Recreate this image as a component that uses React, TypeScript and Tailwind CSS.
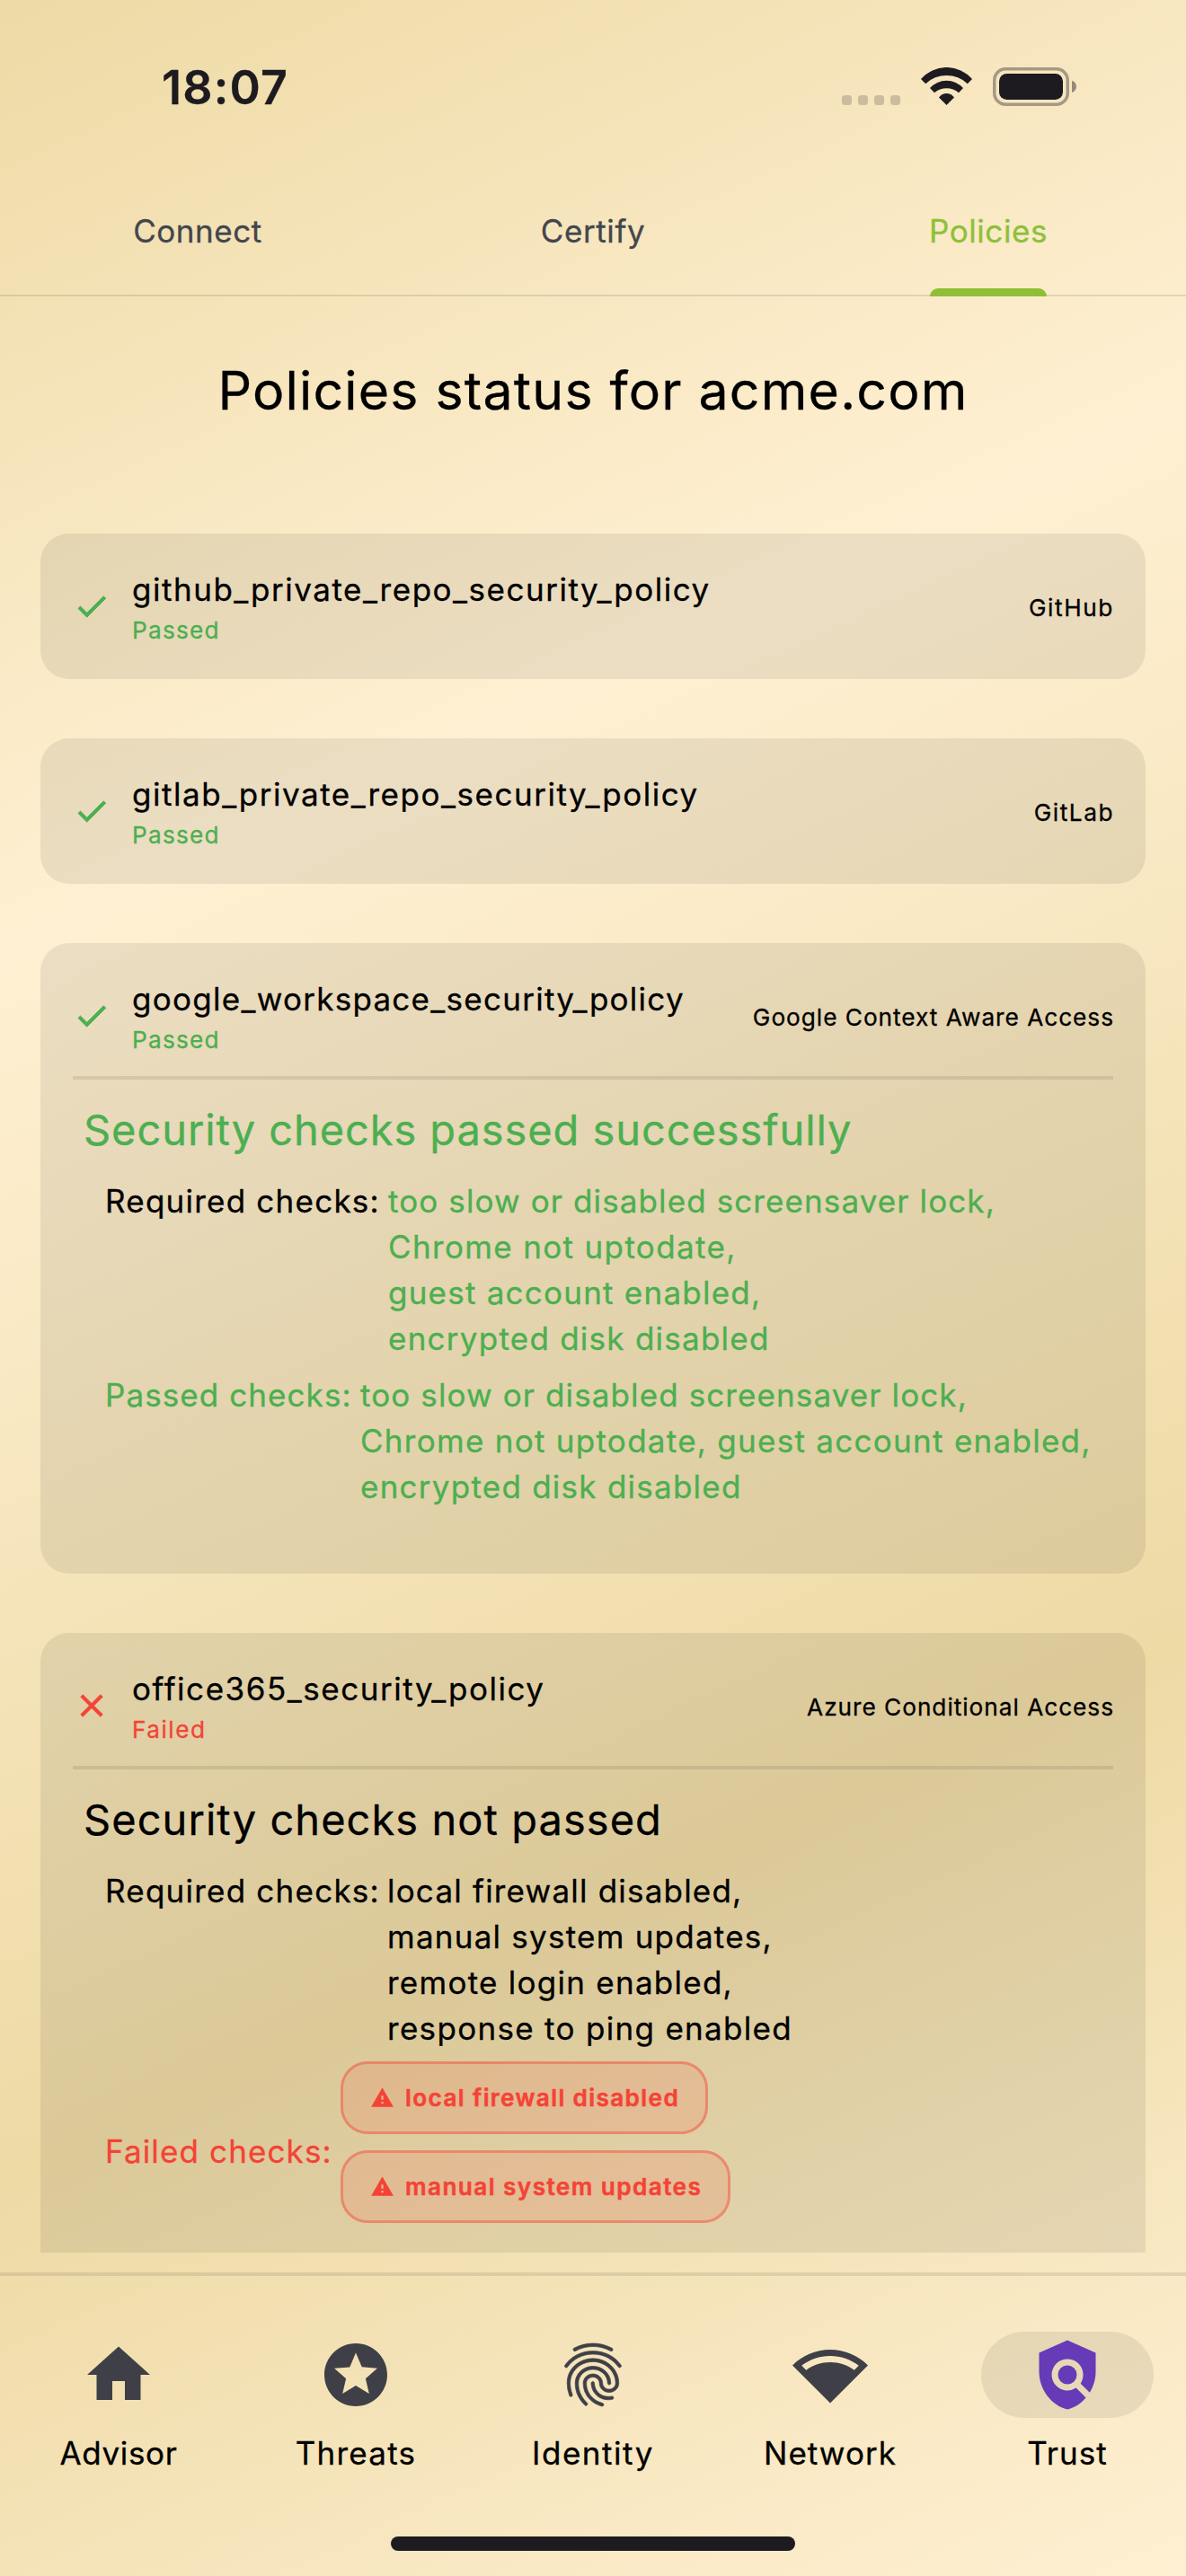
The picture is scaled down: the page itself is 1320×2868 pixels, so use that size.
import type { ReactNode } from "react";
import { MdCheck, MdClose, MdFingerprint, MdHome, MdPolicy, MdStars, MdWarning } from "react-icons/md";

type Line = { text: string; tracking: string };

function StatusBar() {
  return (
    <div className="flex h-[200px] shrink-0 items-start justify-between pr-[122px] pl-[180px]">
      <span className="mt-[68px] text-[52px] leading-[60px] font-semibold tracking-[1.2px] text-[#1d1b20]">18:07</span>
      <svg className="mt-[75px] h-[43px] w-[261px]" viewBox="0 0 261 43" fill="#1d1b20">
        <g fillOpacity="0.2">
          <rect x="0" y="31" width="11" height="11" rx="3.5" />
          <rect x="18" y="31" width="11" height="11" rx="3.5" />
          <rect x="36" y="31" width="11" height="11" rx="3.5" />
          <rect x="54" y="31" width="11" height="11" rx="3.5" />
        </g>
        <path d="M88 13A37.7 37.7 0 0 1 145 13L139.8 18.2A34 34 0 0 0 93.2 18.2Z" />
        <path d="M98 23A24.8 24.8 0 0 1 135 23L130 28.3A20.7 20.7 0 0 0 103 28.3Z" />
        <path d="M108 33.5A10.3 10.3 0 0 1 125 33.5L116.5 42Z" />
        <rect x="169.75" y="1.75" width="81.5" height="39.5" rx="12.5" fill="none" stroke="#1d1b20" strokeOpacity="0.38" strokeWidth="3.5" />
        <rect x="175" y="7" width="71" height="29" rx="8.5" />
        <path d="M256 14.7C259 15.6 261 18.2 261 21.3S259 27 256 28Z" fillOpacity="0.45" />
      </svg>
    </div>
  );
}

function Tabs() {
  return (
    <div className="grid h-[130px] shrink-0 grid-cols-3 border-b-2 border-black/10 text-[35px] leading-[50px] text-[#43464c]">
      <div className="flex justify-center pt-[32px] tracking-[0.55px]">Connect</div>
      <div className="flex justify-center pt-[32px] tracking-[0.62px]">Certify</div>
      <div className="-mb-[2px] flex flex-col items-center justify-between pt-[32px]">
        <span className="tracking-[0.57px] text-[#8dc03a]">Policies</span>
        <span className="h-[9px] w-[130px] rounded-t-[9px] bg-[#8fbf37]" />
      </div>
    </div>
  );
}

function Card({
  name,
  tracking,
  passed,
  provider,
  providerTracking,
  className = "",
  children,
}: {
  name: string;
  tracking: string;
  passed: boolean;
  provider: string;
  providerTracking: string;
  className?: string;
  children?: ReactNode;
}) {
  return (
    <section className={`shrink-0 rounded-[32px] bg-black/[0.075] px-[36px] ${className}`}>
      <div className="flex h-[148px] items-center pt-[14px]">
        {passed ? (
          <MdCheck size={42} color="#4caf50" strokeWidth={0.5} className="[&>path:first-child]:hidden" />
        ) : (
          <MdClose size={42} color="#f44336" strokeWidth={0.5} className="[&>path:first-child]:hidden" />
        )}
        <div className="mt-[25px] ml-[24px] flex flex-col gap-[5px] self-start">
          <span className={`text-[35px] leading-[46px] ${tracking}`}>{name}</span>
          <span
            className={`text-[26.2px] leading-[36px] ${passed ? "tracking-[1.23px] text-[#4caf50]" : "tracking-[1.5px] text-[#f44336]"}`}
          >
            {passed ? "Passed" : "Failed"}
          </span>
        </div>
        <span className={`-mr-[1px] ml-auto pt-[3px] text-[26.2px] leading-[36px] ${providerTracking}`}>{provider}</span>
      </div>
      {children && <div className="h-[4px] bg-black/[0.09]" />}
      {children}
    </section>
  );
}

function Lines({ lines }: { lines: Line[] }) {
  return (
    <div className="flex flex-col whitespace-nowrap">
      {lines.map((line) => (
        <span key={line.text} className={line.tracking}>
          {line.text}
        </span>
      ))}
    </div>
  );
}

function Chip({ label, className }: { label: string; className: string }) {
  return (
    <div
      className={`flex h-[81px] items-center gap-[12px] rounded-[30px] border-[3px] border-[#f44336]/50 bg-[#f44336]/[0.13] bg-clip-padding pl-[30px] text-[26.2px] leading-[36px] font-semibold whitespace-nowrap [-webkit-text-stroke:0.5px] ${className}`}
    >
      <MdWarning size={27} />
      <span className="pt-px">{label}</span>
    </div>
  );
}

function NetworkIcon() {
  return (
    <svg className="size-[84px]" viewBox="0 0 24 24" fill="currentColor">
      <path d="M24 8.98C20.93 5.9 16.69 4 12 4S3.07 5.9 0 8.98L12 21 24 8.98zM2.92 9.07C5.51 7.08 8.67 6 12 6s6.49 1.08 9.08 3.07l-1.43 1.43C17.5 8.94 14.86 8 12 8s-5.5.94-7.65 2.51L2.92 9.07z" />
    </svg>
  );
}

function NavItem({ icon, label, tracking, active = false }: { icon: ReactNode; label: string; tracking: string; active?: boolean }) {
  return (
    <div className="flex flex-col items-center gap-[16px]">
      <div
        className={`flex h-[96px] w-[192px] items-center justify-center rounded-full ${active ? "bg-black/[0.075] text-[#673ab7]" : "text-[#3f4047]"}`}
      >
        {icon}
      </div>
      <span className={`text-[35px] leading-[46px] ${tracking}`}>{label}</span>
    </div>
  );
}

const googleRequired: Line[] = [
  { text: "too slow or disabled screensaver lock,", tracking: "tracking-[1.11px]" },
  { text: "Chrome not uptodate,", tracking: "tracking-[1.35px]" },
  { text: "guest account enabled,", tracking: "tracking-[1.23px]" },
  { text: "encrypted disk disabled", tracking: "tracking-[1.25px]" },
];

const googlePassed: Line[] = [
  { text: "too slow or disabled screensaver lock,", tracking: "tracking-[1.11px]" },
  { text: "Chrome not uptodate, guest account enabled,", tracking: "tracking-[1.28px]" },
  { text: "encrypted disk disabled", tracking: "tracking-[1.25px]" },
];

const officeRequired: Line[] = [
  { text: "local firewall disabled,", tracking: "tracking-[1.2px]" },
  { text: "manual system updates,", tracking: "tracking-[1.24px]" },
  { text: "remote login enabled,", tracking: "tracking-[1.26px]" },
  { text: "response to ping enabled", tracking: "tracking-[1.31px]" },
];

export default function App() {
  return (
    <div className="flex h-[2868px] w-[1320px] flex-col overflow-hidden bg-[linear-gradient(155.28deg,#eddaa5_0%,#fff0d3_30.5%,#eddaa5_70%,#fff0d3_100%)] font-['Inter',sans-serif] text-black [-webkit-text-stroke:0.3px]">
      <StatusBar />
      <Tabs />
      <h1 className="mt-[65px] h-[80px] shrink-0 text-center text-[59px] leading-[80px] tracking-[1.18px]">
        Policies status for acme.com
      </h1>

      <main className="mt-[119px] flex h-[1914px] shrink-0 flex-col gap-[66px] overflow-hidden px-[45px]">
        <Card
          name="github_private_repo_security_policy"
          tracking="tracking-[1.52px]"
          passed
          provider="GitHub"
          providerTracking="tracking-[1.6px]"
          className="h-[162px]"
        />
        <Card
          name="gitlab_private_repo_security_policy"
          tracking="tracking-[1.53px]"
          passed
          provider="GitLab"
          providerTracking="tracking-[1.55px]"
          className="h-[162px]"
        />
        <Card
          name="google_workspace_security_policy"
          tracking="tracking-[1.27px]"
          passed
          provider="Google Context Aware Access"
          providerTracking="tracking-[0.99px]"
          className="h-[702px]"
        >
          <h2 className="mt-[26px] ml-[12px] text-[47px] leading-[60px] tracking-[0.92px] text-[#4caf50]">
            Security checks passed successfully
          </h2>
          <div className="mt-[24px] ml-[36px] flex flex-col gap-[12px] text-[35px] leading-[51px] text-[#4caf50]">
            <div className="flex">
              <span className="w-[315px] shrink-0 tracking-[1.23px] text-black">Required checks:</span>
              <Lines lines={googleRequired} />
            </div>
            <div className="flex">
              <span className="w-[284px] shrink-0 tracking-[1.08px]">Passed checks:</span>
              <Lines lines={googlePassed} />
            </div>
          </div>
        </Card>
        <Card
          name="office365_security_policy"
          tracking="tracking-[1.53px]"
          passed={false}
          provider="Azure Conditional Access"
          providerTracking="tracking-[0.99px]"
          className="h-[830px]"
        >
          <h2 className="mt-[26px] ml-[12px] text-[47px] leading-[60px] tracking-[1.05px]">Security checks not passed</h2>
          <div className="mt-[24px] ml-[36px] flex flex-col gap-[11px] text-[35px] leading-[51px]">
            <div className="flex">
              <span className="w-[314px] shrink-0 tracking-[1.23px]">Required checks:</span>
              <Lines lines={officeRequired} />
            </div>
            <div className="flex items-start text-[#f44336]">
              <span className="mt-[75px] w-[262px] shrink-0 tracking-[1.13px]">Failed checks:</span>
              <div className="flex flex-col gap-[18px]">
                <Chip label="local firewall disabled" className="w-[409px] tracking-[1.36px]" />
                <Chip label="manual system updates" className="w-[434px] tracking-[1.41px]" />
              </div>
            </div>
          </div>
        </Card>
      </main>

      <nav className="mt-[22px] flex flex-1 flex-col items-center border-t-[4px] border-black/[0.09] pt-[62px]">
        <div className="grid w-full grid-cols-5">
          <NavItem icon={<MdHome size={84} />} label="Advisor" tracking="tracking-[0.62px]" />
          <NavItem icon={<MdStars size={84} />} label="Threats" tracking="tracking-[1.22px]" />
          <NavItem
            icon={<MdFingerprint size={84} strokeWidth={0.2} className="[&>path:first-child]:hidden" />}
            label="Identity"
            tracking="tracking-[1.53px]"
          />
          <NavItem icon={<NetworkIcon />} label="Network" tracking="tracking-[1.04px]" />
          <NavItem icon={<MdPolicy size={84} />} label="Trust" tracking="tracking-[1.04px]" active />
        </div>
        <div className="mt-[70px] h-[16px] w-[450px] rounded-full bg-[#1d1b20]" />
      </nav>
    </div>
  );
}
